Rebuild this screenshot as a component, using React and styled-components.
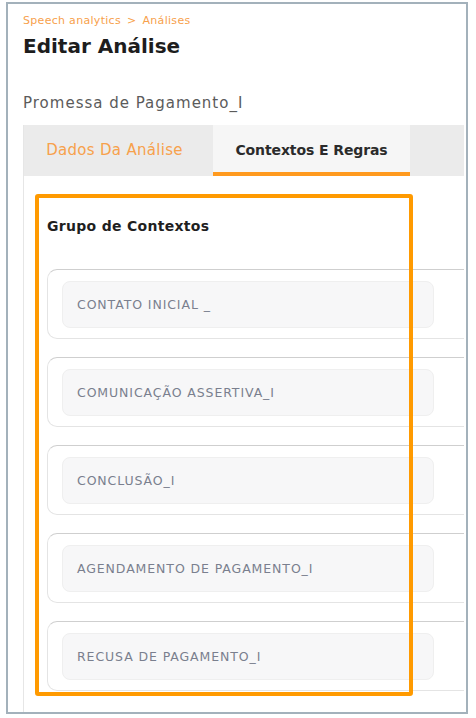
import React from 'react';
import styled, { createGlobalStyle } from 'styled-components';

const GlobalStyle = createGlobalStyle`
  html, body {
    margin: 0;
    padding: 0;
    background: #ffffff;
  }
  body {
    font-family: "DejaVu Sans", "Open Sans", sans-serif;
  }
`;

const Frame = styled.div`
  box-sizing: border-box;
  margin: 2px 0 0 6px;
  width: 462px;
  height: 712px;
  border: 2px solid #a3b1bb;
  padding: 0 0 0 15px;
  overflow: hidden;
  display: flex;
  flex-direction: column;
`;

const Breadcrumb = styled.div`
  margin-top: 10px;
  font-size: 11px;
  line-height: 14px;
  color: #f7a14c;
  letter-spacing: 0.3px;
`;

const Sep = styled.span`
  margin: 0 6px;
`;

const Title = styled.h1`
  margin: 4px 0 0;
  font-size: 20px;
  line-height: 28px;
  font-weight: 700;
  color: #1d1d1d;
`;

const Subtitle = styled.div`
  margin-top: 33px;
  font-size: 15px;
  line-height: 20px;
  color: #5b5b5b;
  letter-spacing: 1px;
`;

const Panel = styled.div`
  position: relative;
  margin-top: 12px;
  margin-right: 2px;
  flex: 1;
  border-left: 1px solid #e6e6e6;
  overflow: hidden;
`;

const Tabs = styled.div`
  display: flex;
  height: 51px;
  background: #ebebeb;
`;

const Tab = styled.div`
  box-sizing: border-box;
  width: ${(p) => p.$w}px;
  display: flex;
  align-items: center;
  justify-content: center;
  font-size: ${(p) => (p.$active ? 14 : 15)}px;
  font-weight: ${(p) => (p.$active ? 700 : 400)};
  letter-spacing: ${(p) => (p.$active ? '-0.1px' : '0.3px')};
  color: ${(p) => (p.$active ? '#2b2b2b' : '#f7a14c')};
  background: ${(p) => (p.$active ? '#f6f6f6' : 'transparent')};
  border-bottom: 4px solid ${(p) => (p.$active ? '#ff9a1f' : 'transparent')};
  padding: 2px ${(p) => (p.$active ? 0 : 8)}px 0 0;
`;

const Body = styled.div`
  padding: 40px 0 0 23px;
`;

const GroupTitle = styled.div`
  font-size: 14px;
  line-height: 20px;
  font-weight: 700;
  color: #1f1f1f;
  letter-spacing: 0.3px;
  margin-bottom: 33px;
`;

const CardList = styled.div`
  display: flex;
  flex-direction: column;
  gap: 18px;
  margin-right: -20px;
`;

const Card = styled.div`
  box-sizing: border-box;
  height: 70px;
  border: 1px solid #e4e4e4;
  border-top-color: #cfcfcf;
  border-radius: 10px;
  padding: 11px 14px;
`;

const Field = styled.div`
  box-sizing: border-box;
  width: 372px;
  height: 47px;
  background: #f7f7f8;
  border: 1px solid #efefef;
  border-radius: 8px;
  display: flex;
  align-items: center;
  padding-left: 14px;
  font-size: 12.5px;
  color: #7a7f8e;
  letter-spacing: 0.9px;
`;

const Highlight = styled.div`
  position: absolute;
  left: 11px;
  top: 69px;
  width: 378px;
  height: 502px;
  box-sizing: border-box;
  border: 4px solid #ff9a00;
  border-radius: 3px;
  pointer-events: none;
`;

const contexts = [
  'CONTATO INICIAL _',
  'COMUNICAÇÃO ASSERTIVA_I',
  'CONCLUSÃO_I',
  'AGENDAMENTO DE PAGAMENTO_I',
  'RECUSA DE PAGAMENTO_I',
];

export default function App() {
  return (
    <>
      <GlobalStyle />
      <Frame>
        <Breadcrumb>
          Speech analytics<Sep>&gt;</Sep>Análises
        </Breadcrumb>
        <Title>Editar Análise</Title>
        <Subtitle>Promessa de Pagamento_I</Subtitle>
        <Panel>
          <Tabs>
            <Tab $w={189}>Dados Da Análise</Tab>
            <Tab $w={197} $active>Contextos E Regras</Tab>
          </Tabs>
          <Body>
            <GroupTitle>Grupo de Contextos</GroupTitle>
            <CardList>
              {contexts.map((c) => (
                <Card key={c}>
                  <Field>{c}</Field>
                </Card>
              ))}
            </CardList>
          </Body>
          <Highlight />
        </Panel>
      </Frame>
    </>
  );
}
